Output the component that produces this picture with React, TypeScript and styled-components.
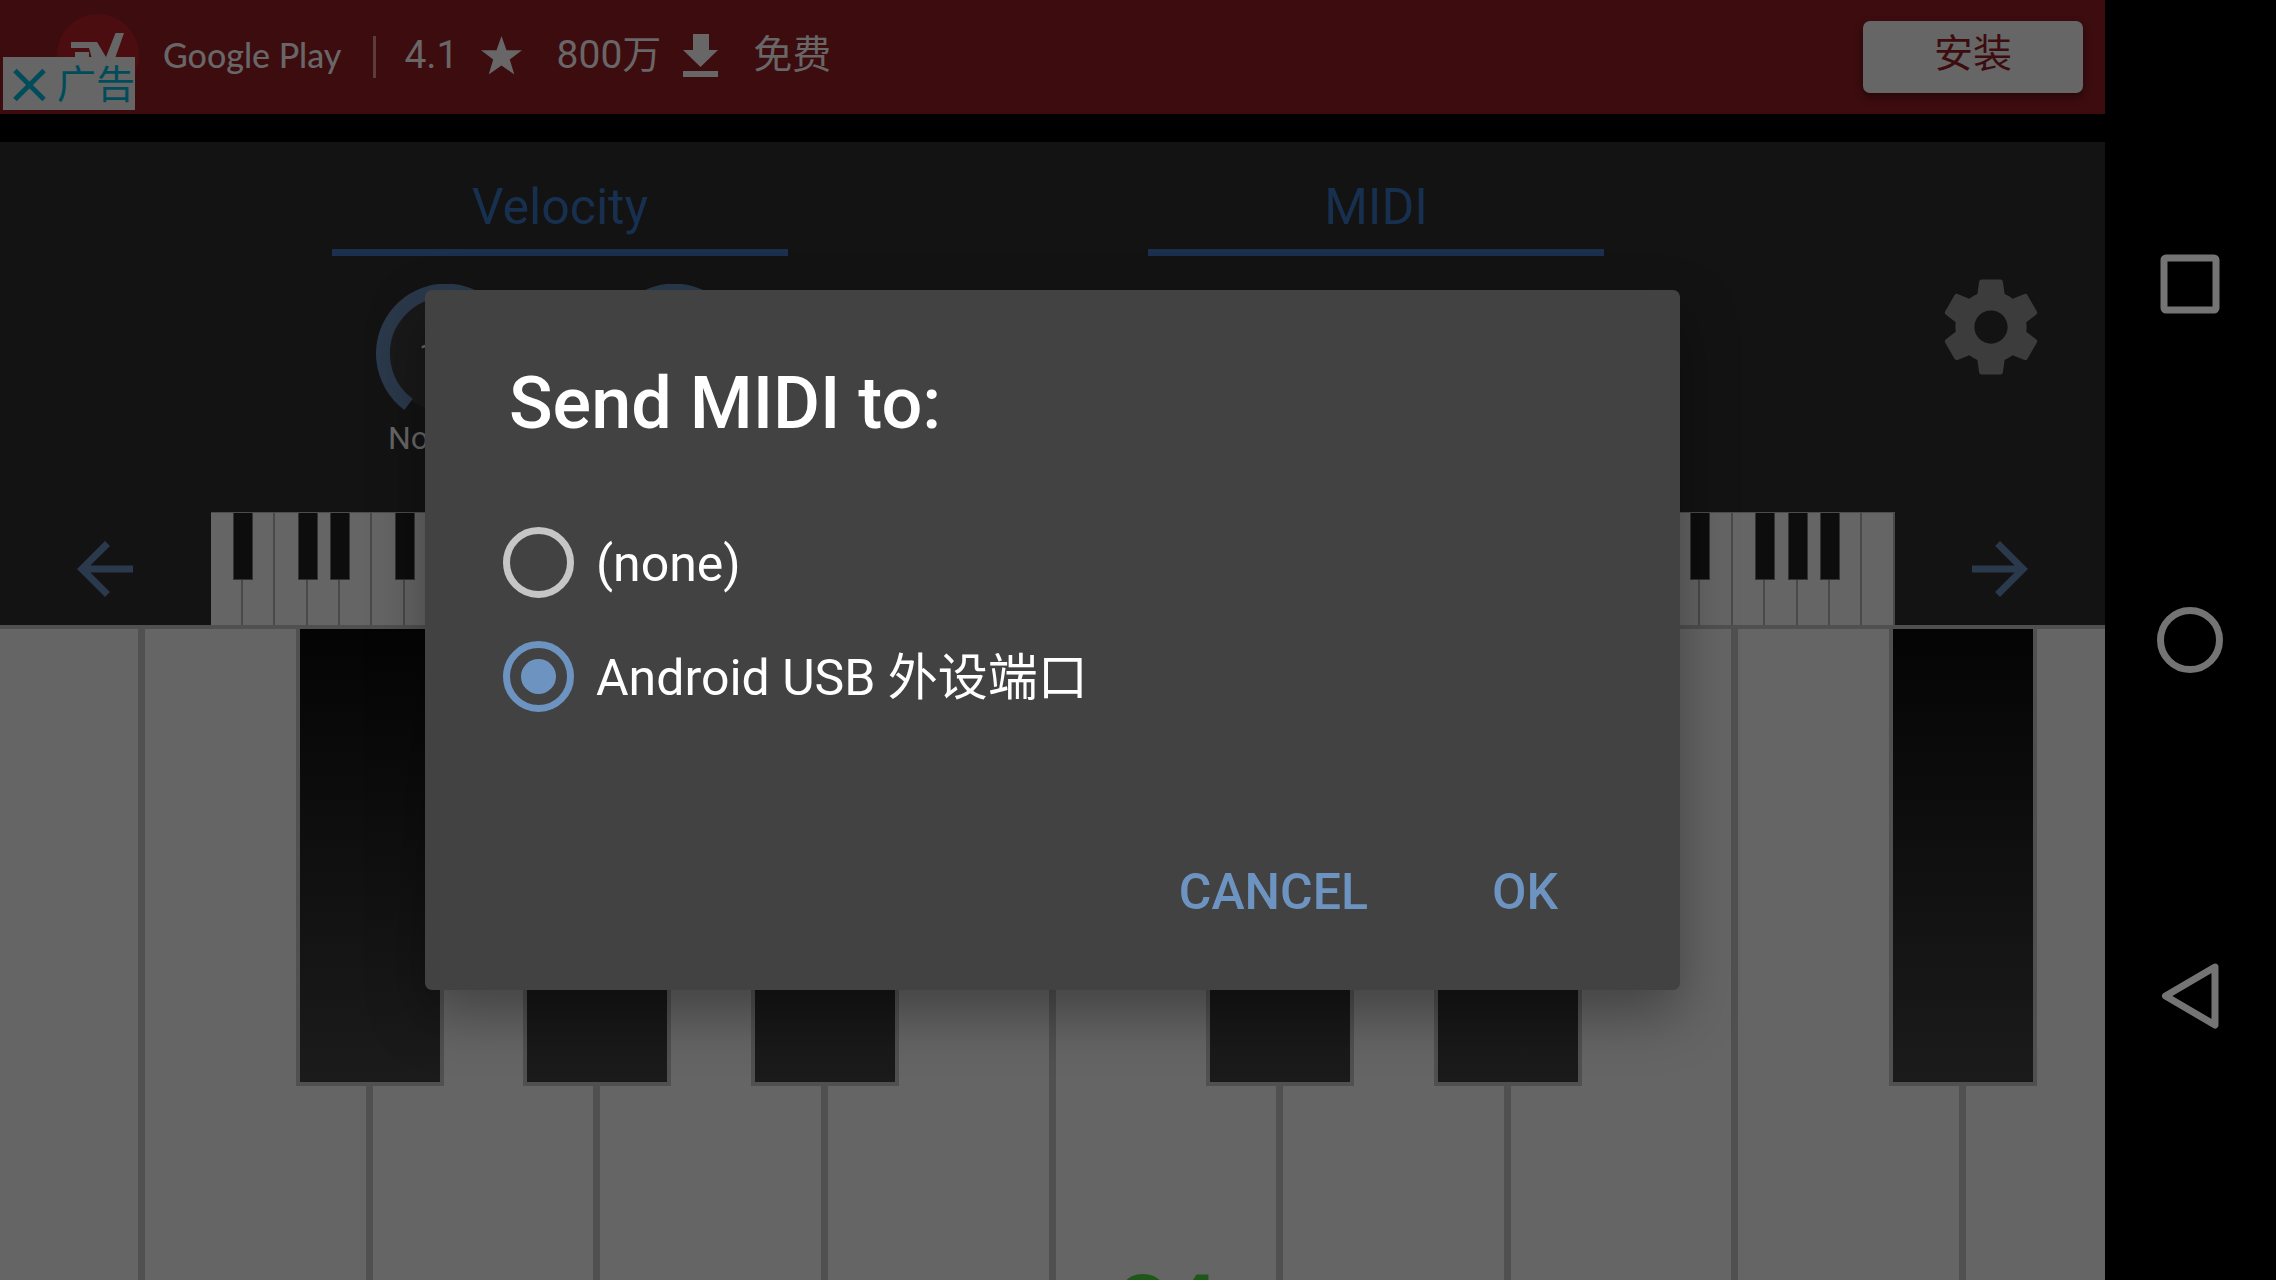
import React, { useState } from "react";
import styled, { createGlobalStyle } from "styled-components";

const GlobalStyle = createGlobalStyle`
  *, *::before, *::after { box-sizing: border-box; }
  body {
    margin: 0;
    background: #000;
    overflow: hidden;
    font-family: Roboto, "Noto Sans CJK SC", sans-serif;
  }
  button {
    font: inherit;
    border: 0;
    padding: 0;
    background: none;
    cursor: pointer;
  }
`;

const Screen = styled.div`
  display: flex;
  height: 100vh;
`;

const Main = styled.main`
  position: relative;
  flex: 1;
  min-width: 0;
  display: flex;
  flex-direction: column;
  overflow: hidden;
`;

/* ---------- Ad banner ---------- */

const AdBar = styled.header`
  position: relative;
  display: flex;
  align-items: center;
  height: 114px;
  padding: 0 22px 4px 57px;
  margin-bottom: 28px;
  background: #3d0c0f;
  color: #686667;
  font-size: 39px;
  line-height: 48px;
`;

const StoreName = styled.span`
  margin-left: 24px;
  font-family: Lato, sans-serif;
  font-size: 34px;
  font-weight: 500;
`;

const Divider = styled.span`
  width: 3px;
  height: 42px;
  margin: 4px 28px 0 32px;
  background: #5e3c3e;
`;

const Stats = styled.div`
  display: flex;
  gap: 35px;
`;

const Stat = styled.span`
  display: flex;
  align-items: center;
  gap: 22px;
`;

const InstallButton = styled.button`
  width: 220px;
  height: 72px;
  margin: 4px 0 0 auto;
  && {
    padding-bottom: 6px;
    background: #666;
  }
  border-radius: 7px;
  color: #3d0c0f;
  box-shadow: 0 4px 8px rgba(0, 0, 0, 0.4);
`;

const AdBadge = styled.button`
  position: absolute;
  left: 3px;
  top: 57px;
  display: flex;
  align-items: center;
  gap: 11px;
  width: 132px;
  height: 53px;
  overflow: hidden;
  white-space: nowrap;
  color: #004c5a;
  && {
    padding: 2px 0 0 10px;
    background: #666;
  }
`;

/* ---------- Control panel ---------- */

const Panel = styled.section`
  background: #131313;
`;

const Controls = styled.div`
  display: grid;
  grid-template-columns: 816fr 816fr 321fr;
  height: 370px;
  padding-left: 152px;
`;

const Group = styled.div`
  display: flex;
  flex-direction: column;
  align-items: center;
  padding-top: 36px;
`;

const GroupTitle = styled.h2`
  width: 456px;
  height: 78px;
  margin: 0 0 28px;
  border-bottom: 7px solid #1b2f4f;
  color: #18304f;
  font-size: 50px;
  font-weight: 400;
  line-height: 58px;
  text-align: center;
`;

const Knobs = styled.div`
  display: flex;
  gap: 88px;
`;

const Knob = styled.div`
  position: relative;
  display: flex;
  flex-direction: column;
  align-items: center;
  width: 140px;
  color: #676767;
  font-size: 32px;
  line-height: 38px;
`;

const KnobValue = styled.span`
  position: absolute;
  top: 51px;
`;

const SettingsButton = styled.button`
  justify-self: end;
  width: 114px;
  height: 114px;
  margin: 128px 57px 0 0;
  color: #3c3c3c;
`;

const RangeRow = styled.div`
  display: grid;
  grid-template-columns: 1fr 8fr 1fr;
  height: 113px;
`;

const ArrowButton = styled.button`
  display: grid;
  place-items: center;
  color: #2a394b;
`;

const MiniKeyboard = styled.div`
  display: flex;
  border-top: 1px solid #4c4c4c;
`;

const MiniKey = styled.span`
  position: relative;
  flex: 1;
  border-right: 2px solid #494949;
  background: #656565;
`;

const MiniBlackKey = styled.span`
  position: absolute;
  z-index: 1;
  top: 0;
  right: -12px;
  width: 20px;
  height: 67px;
  border: 1px solid #333;
  border-top: 0;
  background: #0d0d0d;
`;

/* ---------- Large keyboard ---------- */

const Keyboard = styled.section`
  flex: 1;
  min-height: 0;
  display: flex;
  justify-content: center;
  overflow: hidden;
`;

const WhiteKey = styled.div`
  position: relative;
  flex: 0 0 10.81%;
  display: flex;
  flex-direction: column;
  align-items: center;
  justify-content: flex-end;
  border: solid #505050;
  border-width: 4px 4px 0 3px;
  background: #656565;
`;

const BlackKey = styled.div`
  position: absolute;
  z-index: 1;
  top: 0;
  right: -78px;
  width: 148px;
  height: calc(70% + 1px);
  border: 4px solid #505050;
  border-top: 0;
  background: linear-gradient(#040404, #1b1b1b);
`;

const NoteName = styled.span`
  height: 16px;
  color: #1f571a;
  font-size: 84px;
  font-weight: 700;
  line-height: 84px;
`;

/* ---------- Dialog ---------- */

const Overlay = styled.div`
  position: absolute;
  inset: 0;
  z-index: 2;
  display: grid;
  place-items: center;
`;

const Dialog = styled.form`
  width: 1255px;
  max-width: 90%;
  padding: 72px 42px 35px;
  border-radius: 7px;
  background: #424242;
  color: #fff;
  font-size: 50px;
  line-height: 58px;
  box-shadow: 0 24px 56px rgba(0, 0, 0, 0.34);
`;

const DialogTitle = styled.h1`
  margin: 0 42px 59px;
  font-size: 72px;
  font-weight: 500;
  line-height: 84px;
`;

const Options = styled.div`
  display: flex;
  flex-direction: column;
  margin: 0 36px 96px;
`;

const Option = styled.label`
  display: flex;
  align-items: center;
  gap: 22px;
  height: 114px;
`;

const OptionText = styled.span`
  padding-top: 4px;
`;

const Radio = styled.input`
  appearance: none;
  display: grid;
  place-items: center;
  width: 71px;
  height: 71px;
  margin: 0;
  border: 7px solid #c6c6c6;
  border-radius: 50%;
  &:checked {
    border-color: #6d94c1;
  }
  &:checked::before {
    content: "";
    width: 35px;
    height: 35px;
    border-radius: 50%;
    background: #6d94c1;
  }
`;

const Actions = styled.div`
  display: flex;
  justify-content: flex-end;
  gap: 16px;
`;

const ActionButton = styled.button`
  min-width: 226px;
  height: 126px;
  && {
    padding: 0 28px;
    font-weight: 500;
  }
  color: #6d94c1;
`;

/* ---------- System navigation ---------- */

const NavBar = styled.nav`
  display: flex;
  flex-direction: column;
  align-items: center;
  justify-content: center;
  gap: 276px;
  width: 171px;
  padding-right: 1px;
  background: #000;
`;

const NavButton = styled.button`
  display: grid;
  place-items: center;
  width: 80px;
  height: 80px;
`;

const SHARPS = ["A", "C", "D", "F", "G"];
const SCALE = ["A", "B", "C", "D", "E", "F", "G"];
const MINI_NOTES = Array.from({ length: 52 }, (_, i) => SCALE[i % 7]);
const NOTES = ["E", "F", "G", "A", "B", "C", "D", "E", "F", "G"];
const hasSharp = (note: string) => SHARPS.includes(note);

function KnobDial() {
  return (
    <svg width="140" height="135" viewBox="0 0 140 135" aria-hidden="true">
      <circle cx="70" cy="70" r="58" fill="#191919" />
      <path
        d="M32.6 120.3A63 63 0 1 1 107.4 120.3"
        fill="none"
        stroke="#2a394b"
        strokeWidth="14"
      />
    </svg>
  );
}

function AppLogo() {
  return (
    <svg width="82" height="82" viewBox="57 14 82 82" aria-hidden="true">
      <circle cx="98" cy="55" r="41" fill="#4b0d10" />
      <path
        fill="#666"
        d="M71 42h26l9 15 9.500-24H124l-17 48h-9L89 48H71zM75 52h14v6H75z"
      />
    </svg>
  );
}

function Arrow({ d }: { d: string }) {
  return (
    <svg width="84" height="84" viewBox="0 0 24 24" fill="currentColor" aria-hidden="true">
      <path d={d} />
    </svg>
  );
}

export default function App() {
  const [port, setPort] = useState("usb");

  return (
    <>
      <GlobalStyle />
      <Screen>
        <Main>
          <AdBar>
            <AppLogo />
            <StoreName>Google Play</StoreName>
            <Divider />
            <Stats>
              <Stat>
                4.1
                <svg width="41" height="40" viewBox="0 0 41 40" fill="currentColor" aria-hidden="true">
                  <path d="M20.500 1l5 14.200H41L28.800 24.500 33.300 39.500 20.500 30.600 7.700 39.500 12.200 24.500 0 15.200H15.500z" />
                </svg>
              </Stat>
              <Stat>
                800万
                <svg width="35" height="43" viewBox="0 0 35 43" fill="currentColor" aria-hidden="true">
                  <path d="M10 0h16v16h9L17.500 33 0 16h10zM0 37h35v6H0z" />
                </svg>
              </Stat>
              <Stat>免费</Stat>
            </Stats>
            <InstallButton type="button">安装</InstallButton>
            <AdBadge type="button">
              <svg width="34" height="34" viewBox="0 0 34 34" aria-hidden="true">
                <path d="M2 2l30 30M32 2L2 32" stroke="currentColor" strokeWidth="5" />
              </svg>
              广告
            </AdBadge>
          </AdBar>

          <Panel>
            <Controls>
              <Group>
                <GroupTitle>Velocity</GroupTitle>
                <Knobs>
                  <Knob>
                    <KnobDial />
                    <KnobValue>100</KnobValue>
                    Note On
                  </Knob>
                  <Knob>
                    <KnobDial />
                  </Knob>
                </Knobs>
              </Group>
              <Group>
                <GroupTitle>MIDI</GroupTitle>
              </Group>
              <SettingsButton type="button" aria-label="Settings">
                <svg width="114" height="114" viewBox="0 0 24 24" fill="currentColor" aria-hidden="true">
                  <path d="M19.430 12.980c.04-.32.07-.64.07-.98s-.03-.66-.07-.98l2.110-1.650c.19-.15.24-.42.12-.64l-2-3.460c-.12-.22-.39-.3-.61-.22l-2.490 1c-.52-.4-1.080-.73-1.690-.98l-.38-2.650C14.460 2.180 14.250 2 14 2h-4c-.25 0-.46.18-.49.42l-.38 2.650c-.61.25-1.170.59-1.690.98l-2.490-1c-.23-.09-.49 0-.61.22l-2 3.460c-.13.22-.07.49.12.64l2.110 1.650c-.04.32-.07.65-.07.98s.03.66.07.98l-2.110 1.650c-.19.15-.24.42-.12.64l2 3.460c.12.22.39.3.61.22l2.490-1c.52.4 1.080.73 1.690.98l.38 2.650c.03.24.24.42.49.42h4c.25 0 .46-.18.49-.42l.38-2.650c.61-.25 1.170-.59 1.690-.98l2.490 1c.23.09.49 0 .61-.22l2-3.460c.12-.22.07-.49-.12-.64l-2.110-1.650zM12 15.500c-1.930 0-3.500-1.570-3.500-3.500s1.570-3.500 3.500-3.500 3.500 1.570 3.500 3.500-1.570 3.500-3.500 3.500z" />
                </svg>
              </SettingsButton>
            </Controls>
            <RangeRow>
              <ArrowButton type="button" aria-label="Lower notes">
                <Arrow d="M20 11H7.830l5.590-5.590L12 4l-8 8 8 8 1.410-1.410L7.830 13H20v-2z" />
              </ArrowButton>
              <MiniKeyboard>
                {MINI_NOTES.map((note, i) => (
                  <MiniKey key={i}>
                    {hasSharp(note) && i < MINI_NOTES.length - 1 && <MiniBlackKey />}
                  </MiniKey>
                ))}
              </MiniKeyboard>
              <ArrowButton type="button" aria-label="Higher notes">
                <Arrow d="M12 4l-1.410 1.410L16.170 11H4v2h12.170l-5.580 5.590L12 20l8-8z" />
              </ArrowButton>
            </RangeRow>
          </Panel>

          <Keyboard>
            {NOTES.map((note, i) => (
              <WhiteKey key={i}>
                {note === "C" && <NoteName>C4</NoteName>}
                {hasSharp(note) && i < NOTES.length - 1 && <BlackKey />}
              </WhiteKey>
            ))}
          </Keyboard>

          <Overlay>
            <Dialog
              role="dialog"
              aria-labelledby="dialog-title"
              onSubmit={(event) => event.preventDefault()}
            >
              <DialogTitle id="dialog-title">Send MIDI to:</DialogTitle>
              <Options role="radiogroup" aria-labelledby="dialog-title">
                <Option>
                  <Radio
                    type="radio"
                    name="port"
                    checked={port === "none"}
                    onChange={() => setPort("none")}
                  />
                  <OptionText>(none)</OptionText>
                </Option>
                <Option>
                  <Radio
                    type="radio"
                    name="port"
                    checked={port === "usb"}
                    onChange={() => setPort("usb")}
                  />
                  <OptionText>Android USB 外设端口</OptionText>
                </Option>
              </Options>
              <Actions>
                <ActionButton type="button">CANCEL</ActionButton>
                <ActionButton type="submit">OK</ActionButton>
              </Actions>
            </Dialog>
          </Overlay>
        </Main>

        <NavBar aria-label="System navigation">
          <NavButton type="button" aria-label="Recent apps">
            <svg width="66" height="66" fill="none" stroke="#747474" strokeWidth="7" aria-hidden="true">
              <rect x="7" y="7" width="52" height="52" rx="2" />
            </svg>
          </NavButton>
          <NavButton type="button" aria-label="Home">
            <svg width="66" height="66" fill="none" stroke="#747474" strokeWidth="7" aria-hidden="true">
              <circle cx="33" cy="33" r="29.500" />
            </svg>
          </NavButton>
          <NavButton type="button" aria-label="Back">
            <svg width="66" height="66" fill="none" stroke="#747474" strokeWidth="7" strokeLinejoin="round" aria-hidden="true">
              <path d="M58 4L8.500 33 58 62z" />
            </svg>
          </NavButton>
        </NavBar>
      </Screen>
    </>
  );
}
